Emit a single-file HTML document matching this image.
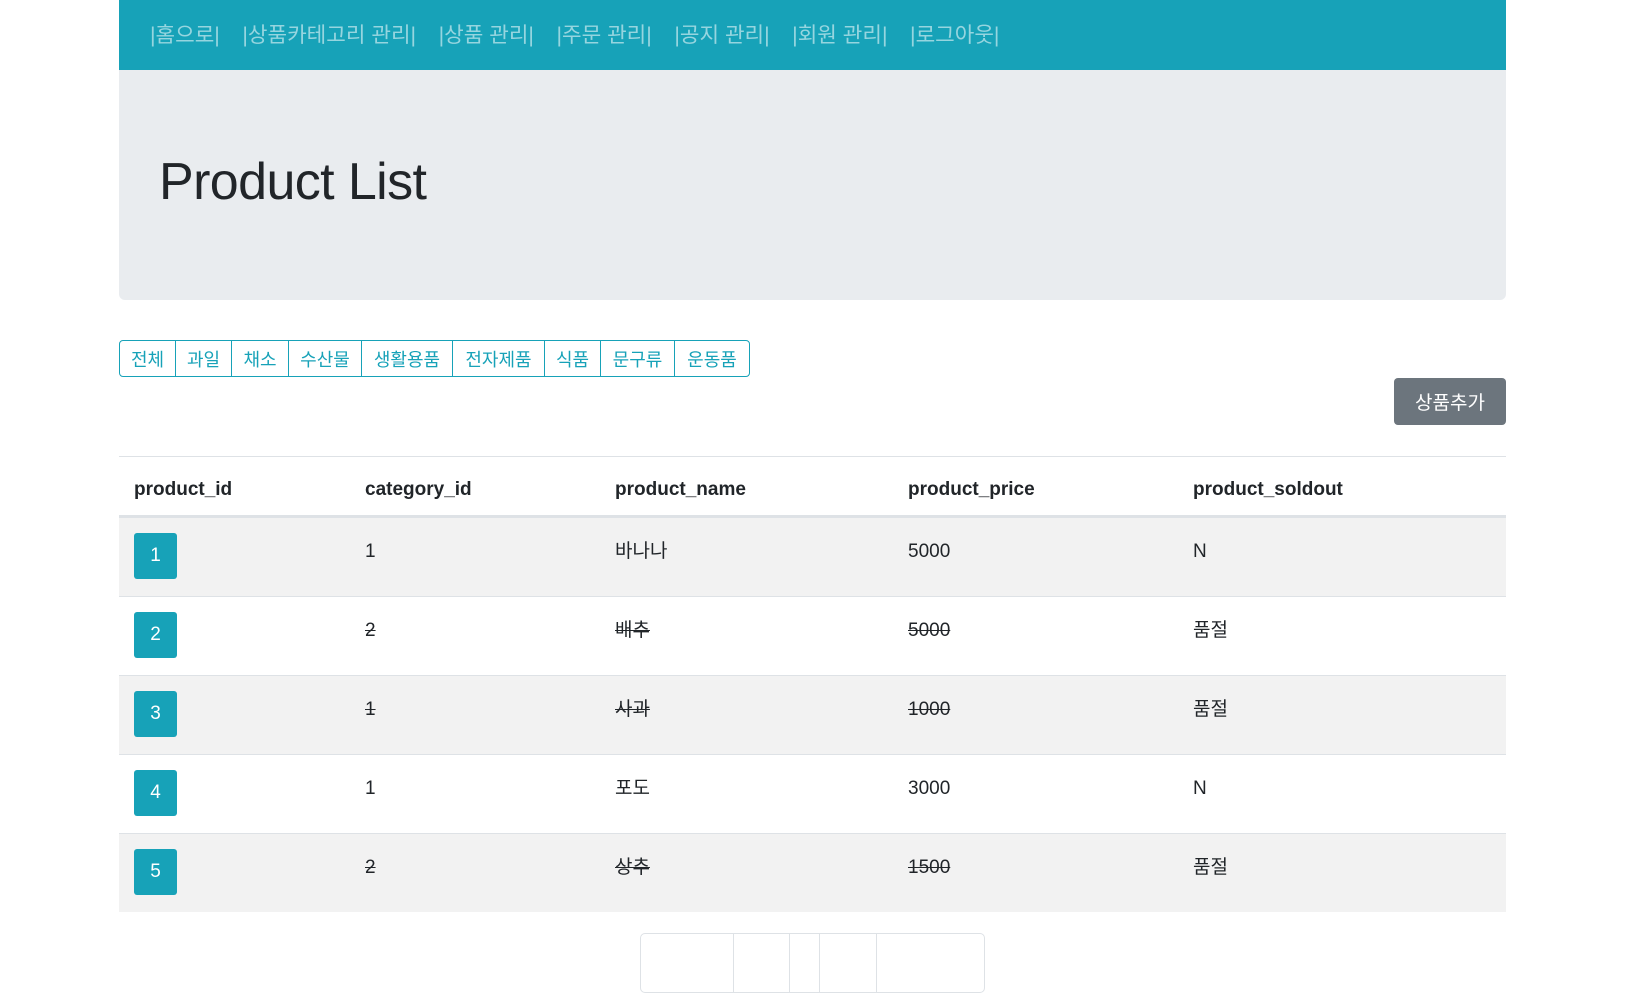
<!DOCTYPE html>
<html><head><meta charset="utf-8"><style>
*{box-sizing:border-box;margin:0;padding:0}
body{width:1642px;height:938px;overflow:hidden;background:#fff;font-family:"Liberation Sans","Noto Sans CJK KR",sans-serif;color:#212529}
.wrap{position:absolute;left:119px;width:1387px;top:0}
.nav{height:70px;background:#17a2b8;padding-left:31px;display:flex;align-items:center;gap:0}
.nav span{color:rgba(255,255,255,.55);font-size:21.3px;margin-right:22.5px;position:relative;top:-2px}
.jumbo{position:absolute;top:70px;left:0;width:1387px;height:230px;background:#e9ecef;border-radius:0 0 6px 6px}
.jumbo h1{position:absolute;left:40px;top:82px;font-size:52px;font-weight:400;letter-spacing:-0.6px;color:#212529}
.bg{position:absolute;top:340px;left:0;height:37px;display:flex}
.bg div{height:37px;border:1px solid #17a2b8;color:#17a2b8;font-size:18px;display:flex;align-items:center;justify-content:center;margin-left:-1px}
.bg div:first-child{margin-left:0;border-radius:4px 0 0 4px}
.bg div:last-child{border-radius:0 4px 4px 0}
.add{position:absolute;left:1275px;top:378px;width:112px;height:47px;background:#6c757d;color:#fff;border-radius:4px;font-size:19px;display:flex;align-items:center;justify-content:center}
.tbl{position:absolute;top:456px;left:0;width:1387px;border-top:1px solid #dee2e6}
.row{position:relative;height:79px;border-top:1px solid #dee2e6}
.row.s{background:#f2f2f2}
.hdr{position:relative;height:60px;border-bottom:2px solid #dee2e6}
.c{position:absolute;font-size:19px}
.hdr .c{top:22px;font-weight:bold;font-size:19px}
.row .c{top:23px}
.row .c.k{top:18px}
.badge{position:absolute;left:15px;top:15px;width:43px;height:46px;background:#17a2b8;border-radius:3px;color:#fff;font-size:19px;display:flex;align-items:center;justify-content:center}
s{text-decoration:line-through}
.pg{position:absolute;top:933px;left:521px;width:345px;height:60px;border:1px solid #dee2e6;border-radius:5px}
.pg i{position:absolute;top:0;bottom:0;width:1px;background:#dee2e6}
</style></head><body>
<div class="wrap">
<div class="nav"><span>|홈으로|</span><span>|상품카테고리 관리|</span><span>|상품 관리|</span><span>|주문 관리|</span><span>|공지 관리|</span><span>|회원 관리|</span><span>|로그아웃|</span></div>
<div class="jumbo"><h1>Product List</h1></div>
<div class="bg">
<div style="width:57px">전체</div><div style="width:57px">과일</div><div style="width:58px">채소</div><div style="width:74px">수산물</div><div style="width:92px">생활용품</div><div style="width:93px">전자제품</div><div style="width:57px">식품</div><div style="width:75px">문구류</div><div style="width:76px">운동품</div>
</div>
<div class="add">상품추가</div>
<div class="tbl">
<div class="hdr"><div class="c" style="left:15px">product_id</div><div class="c" style="left:246px">category_id</div><div class="c" style="left:496px">product_name</div><div class="c" style="left:789px">product_price</div><div class="c" style="left:1074px">product_soldout</div></div>
<div class="row s"><div class="badge">1</div><div class="c" style="left:246px">1</div><div class="c k" style="left:496px">바나나</div><div class="c" style="left:789px">5000</div><div class="c" style="left:1074px">N</div></div>
<div class="row"><div class="badge">2</div><div class="c" style="left:246px"><s>2</s></div><div class="c k" style="left:496px"><s>배추</s></div><div class="c" style="left:789px"><s>5000</s></div><div class="c k" style="left:1074px">품절</div></div>
<div class="row s"><div class="badge">3</div><div class="c" style="left:246px"><s>1</s></div><div class="c k" style="left:496px"><s>사과</s></div><div class="c" style="left:789px"><s>1000</s></div><div class="c k" style="left:1074px">품절</div></div>
<div class="row"><div class="badge">4</div><div class="c" style="left:246px">1</div><div class="c k" style="left:496px">포도</div><div class="c" style="left:789px">3000</div><div class="c" style="left:1074px">N</div></div>
<div class="row s"><div class="badge">5</div><div class="c" style="left:246px"><s>2</s></div><div class="c k" style="left:496px"><s>상추</s></div><div class="c" style="left:789px"><s>1500</s></div><div class="c k" style="left:1074px">품절</div></div>
</div>
<div class="pg"><i style="left:92px"></i><i style="left:148px"></i><i style="left:178px"></i><i style="left:235px"></i></div>
</div>
</body></html>
